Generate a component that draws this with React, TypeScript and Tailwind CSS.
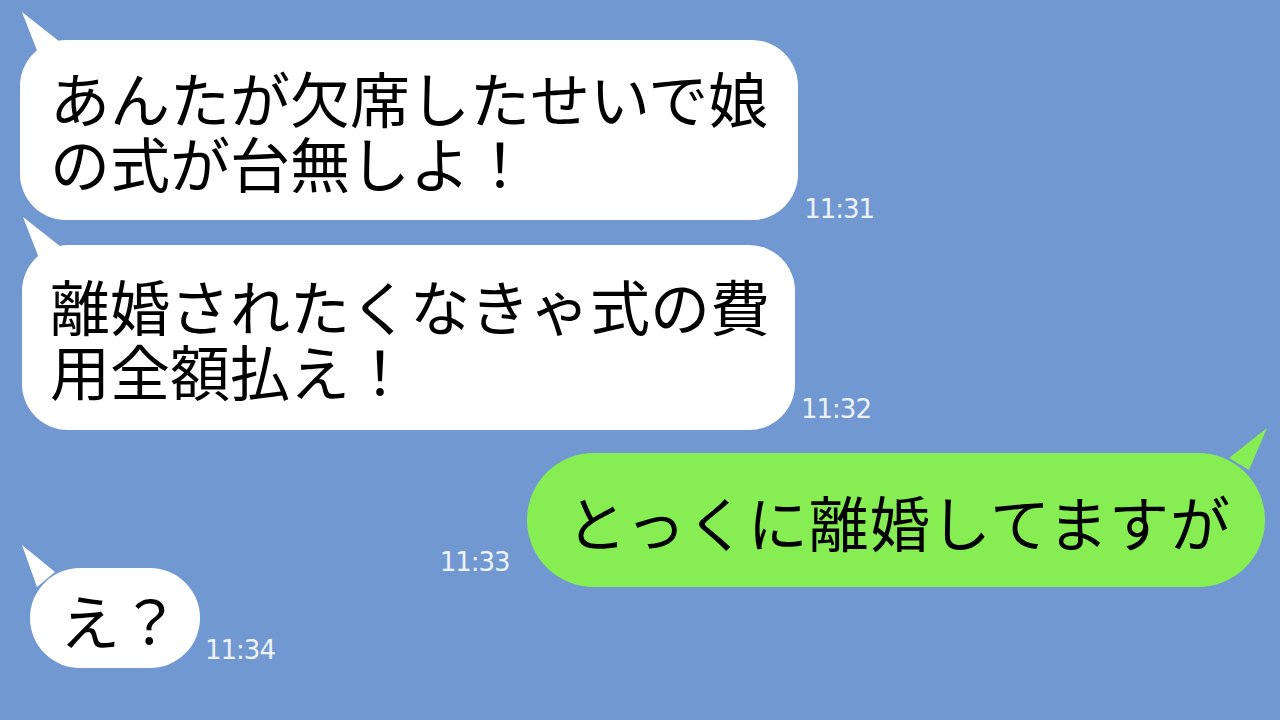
const jp = "font-['Noto_Sans_CJK_JP','Noto_Sans_CJK_SC',sans-serif]";
const timeFont = "font-['DejaVu_Sans',sans-serif]";

function LeftTail({ className }: { className: string }) {
  // 左上のしっぽ
  return (
    <svg className={`absolute ${className}`} width="50" height="50" viewBox="0 0 50 50">
      <polygon points="2,2 18,43 40,32" fill="#ffffff" />
    </svg>
  );
}

function Time({ label, className }: { label: string; className: string }) {
  return (
    <span className={`${timeFont} text-[26px] leading-none tracking-[-1px] text-[#eef3fb] ${className}`}>
      {label}
    </span>
  );
}

export default function App() {
  return (
    <div className={`w-[1280px] h-[720px] overflow-hidden bg-[#7198d0] ${jp} text-black`}>
      <div className="flex flex-col pt-[40px]">
        {/* 1 */}
        <div className="flex items-end pl-[20px]">
          <div className="relative bg-white rounded-[46px] pl-[30px] pr-[30px] pt-[24px] pb-[26px] text-[60px] leading-[65px]">
            <LeftTail className="left-0 top-[-30px]" />
            <span className="relative">あんたが欠席したせいで娘<br />の式が台無しよ！</span>
          </div>
          <Time label="11:31" className="ml-[6px] mb-[-2px]" />
        </div>

        {/* 2 */}
        <div className="flex items-end pl-[22px] mt-[25px]">
          <div className="relative bg-white rounded-[46px] pl-[28px] pr-[25px] pt-[27px] pb-[28px] text-[60px] leading-[65px]">
            <LeftTail className="left-[-1px] top-[-30px]" />
            <span className="relative">離婚されたくなきゃ式の費<br />用全額払え！</span>
          </div>
          <Time label="11:32" className="ml-[6px] mb-[8px]" />
        </div>

        {/* 3 */}
        <div className="flex items-end justify-end pr-[15px] mt-[23px]">
          <Time label="11:33" className="mr-[17px] mb-[12px]" />
          <div className="relative bg-[#86ee53] rounded-full pl-[40px] pr-[34px] pt-[35px] pb-[34px] text-[60px] leading-[65px] tracking-[1px]">
            <svg className="absolute right-[-4px] top-[-27px]" width="50" height="50" viewBox="0 0 50 50">
              <polygon points="48,2 10,32 30,44" fill="#86ee53" />
            </svg>
            <span className="relative">とっくに離婚してますが</span>
          </div>
        </div>

        {/* 4 */}
        <div className="flex items-end pl-[30px] mt-[-19px]">
          <div className="relative bg-white rounded-full pl-[30px] pr-[20px] pt-[18px] pb-[17px] text-[60px] leading-[65px]">
            <svg className="absolute left-[-10px] top-[-25px]" width="50" height="50" viewBox="0 0 50 50">
              <polygon points="2,2 17,44 35,29" fill="#ffffff" />
            </svg>
            <span className="relative">え？</span>
          </div>
          <Time label="11:34" className="ml-[5px] mb-[5px]" />
        </div>
      </div>
    </div>
  );
}
